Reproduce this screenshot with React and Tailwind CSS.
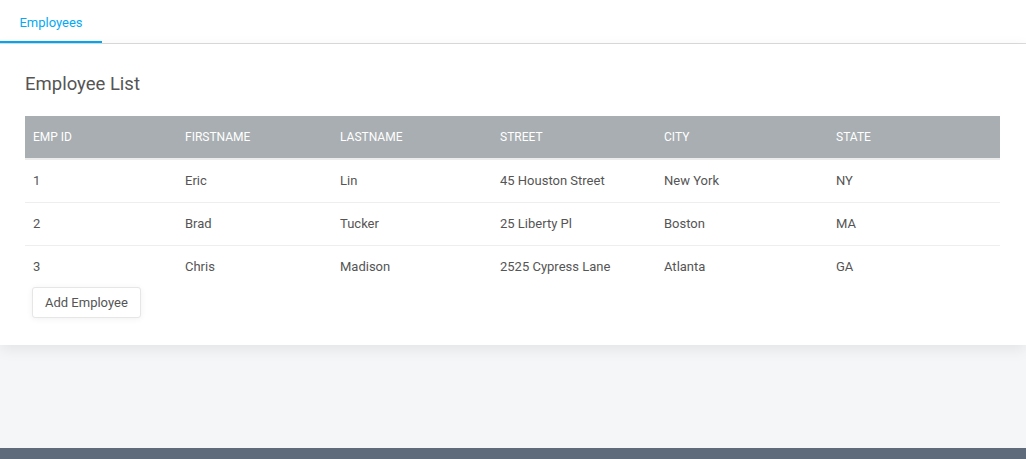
const employees = [
  { id: 1, first: 'Eric', last: 'Lin', street: '45 Houston Street', city: 'New York', state: 'NY' },
  { id: 2, first: 'Brad', last: 'Tucker', street: '25 Liberty Pl', city: 'Boston', state: 'MA' },
  { id: 3, first: 'Chris', last: 'Madison', street: '2525 Cypress Lane', city: 'Atlanta', state: 'GA' },
];

const columns = ['Emp ID', 'Firstname', 'Lastname', 'Street', 'City', 'State'];

export default function App() {
  return (
    <div className="h-[459px] flex flex-col bg-[#f5f6f8] font-['Roboto',sans-serif] overflow-hidden">
      {/* Tabs */}
      <div className="h-[44px] bg-white border-b border-[#dcdcdc] flex shrink-0">
        <button className="w-[102px] h-full pt-[4px] border-b-2 border-[#03a9f4] -mb-px text-[13px] text-[#03a9f4]">
          Employees
        </button>
      </div>

      {/* Card */}
      <div className="bg-white shadow-[0_4px_14px_rgba(0,0,0,0.08)] px-[25px] pt-[29px] pb-[27px] shrink-0 relative">
        <h2 className="text-[18.5px] text-[#555] leading-[22px] mb-[21px]">Employee List</h2>

        <table className="w-[975px] border-collapse text-[13px]">
          <colgroup>
            <col className="w-[152px]" />
            <col className="w-[155px]" />
            <col className="w-[160px]" />
            <col className="w-[164px]" />
            <col className="w-[172px]" />
            <col className="w-[172px]" />
          </colgroup>
          <thead>
            <tr className="bg-[#a8aeb1] h-[43px] border-b-2 border-[#ececec]">
              {columns.map(c => (
                <th key={c} className="text-left font-normal text-white text-[12px] uppercase pl-[8px]">{c}</th>
              ))}
            </tr>
          </thead>
          <tbody className="text-[#555]">
            {employees.map((e, i) => (
              <tr key={e.id} className={`h-[43px] ${i < employees.length - 1 ? 'border-b border-[#eeeeee]' : ''}`}>
                <td className="pl-[8px]">{e.id}</td>
                <td className="pl-[8px]">{e.first}</td>
                <td className="pl-[8px]">{e.last}</td>
                <td className="pl-[8px]">{e.street}</td>
                <td className="pl-[8px]">{e.city}</td>
                <td className="pl-[8px]">{e.state}</td>
              </tr>
            ))}
          </tbody>
        </table>

        <button className="ml-[7px] mt-[-1px] h-[31px] px-[12px] bg-white border border-[#e6e6e6] rounded-[3px] shadow-[0_1px_6px_rgba(0,0,0,0.06)] text-[13px] text-[#555]">
          Add Employee
        </button>
      </div>

      <div className="flex-1" />
      <div className="h-[11px] bg-[#5f6a7a] shrink-0" />
    </div>
  );
}
